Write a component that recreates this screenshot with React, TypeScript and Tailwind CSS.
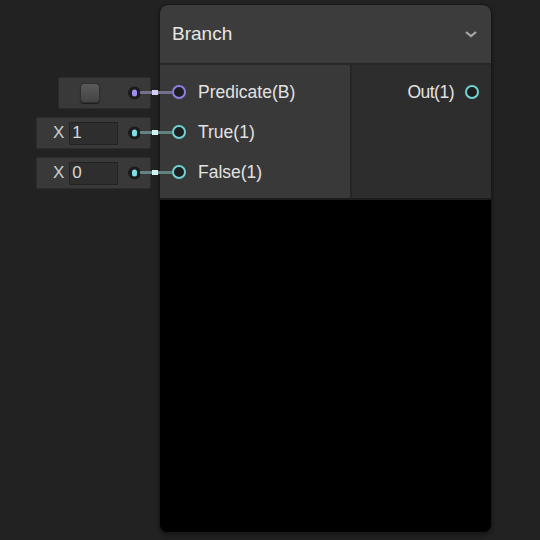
import { ReactNode } from "react";

type PortColor = "purple" | "teal";

const ring: Record<PortColor, string> = {
  purple: "border-[#8f7fe8]",
  teal: "border-[#6fd3d6]",
};

const dot: Record<PortColor, string> = {
  purple: "bg-[#9d8ef0]",
  teal: "bg-[#7ee0e2]",
};

const wire: Record<PortColor, string> = {
  purple: "bg-[#757089]",
  teal: "bg-[#648282]",
};

const knot: Record<PortColor, string> = {
  purple: "bg-[#d6cff6]",
  teal: "bg-[#d0f3f3]",
};

const Port = ({ color }: { color: PortColor }) => (
  <span
    className={`block w-[14px] h-[14px] rounded-full border-2 bg-[#1e1e1e] ${ring[color]}`}
  />
);

const InputField = ({
  children,
  color,
  className,
}: {
  children: ReactNode;
  color: PortColor;
  className: string;
}) => (
  <div
    className={`relative h-[32px] flex items-center bg-[#393939] border border-[#2c2c2c] rounded-[2px] ${className}`}
  >
    {children}
    <span className="absolute right-[9px] top-1/2 -translate-y-1/2 w-[13px] h-[13px] rounded-full bg-[#1b1b1b] flex items-center justify-center">
      <span className={`block w-[5px] h-[7px] rounded-full ${dot[color]}`} />
    </span>
  </div>
);

const Vector1 = ({ value }: { value: string }) => (
  <>
    <span className="ml-[16px] text-[17px] text-[#cfcfcf]">X</span>
    <span className="ml-[5px] w-[49px] h-[23px] bg-[#2e2e2e] border border-[#232323] flex items-center pl-[2px] text-[17px] text-[#d8d8d8]">
      {value}
    </span>
  </>
);

const Wire = ({ color, top }: { color: PortColor; top: string }) => (
  <div className={`absolute z-10 left-[140px] w-[32px] h-[3px] ${top} ${wire[color]}`}>
    <span className={`absolute left-[12px] -top-[1px] w-[6px] h-[5px] ${knot[color]}`} />
  </div>
);

const inputs: { label: string; color: PortColor }[] = [
  { label: "Predicate(B)", color: "purple" },
  { label: "True(1)", color: "teal" },
  { label: "False(1)", color: "teal" },
];

export default function App() {
  return (
    <div className="relative w-[540px] h-[540px] bg-[#222222] overflow-hidden font-['Liberation_Sans',Arial,sans-serif]">
      {/* fields feeding the node */}
      <div className="absolute left-0 top-[77px] w-[151px] flex flex-col items-end gap-[8px]">
        <InputField color="purple" className="w-[93px]">
          <span className="ml-[21px] w-[20px] h-[20px] rounded-[4px] bg-gradient-to-b from-[#5a5a5a] to-[#444444] border border-[#2e2e2e] shadow-[0_1px_1px_rgba(0,0,0,0.5)]" />
        </InputField>
        <InputField color="teal" className="w-[115px]">
          <Vector1 value="1" />
        </InputField>
        <InputField color="teal" className="w-[115px]">
          <Vector1 value="0" />
        </InputField>
      </div>

      {/* node */}
      <div className="absolute left-[159px] top-[4px] w-[333px] h-[529px] rounded-[9px] border border-[#181818] bg-black overflow-hidden flex flex-col shadow-[0_2px_4px_rgba(0,0,0,0.4)]">
        <div className="h-[60px] shrink-0 bg-[#3c3c3c] border-b-2 border-[#272727] flex items-center justify-between pl-[12px] pr-[13px]">
          <span className="text-[19px] text-[#e6e6e6]">Branch</span>
          <svg width="14" height="10" viewBox="0 0 14 10" fill="none">
            <path d="M2 3l5 4 5-4" stroke="#a8a8a8" strokeWidth="2.2" />
          </svg>
        </div>

        <div className="h-[135px] shrink-0 flex border-b-2 border-[#1c1c1c]">
          <div className="w-[192px] bg-[#393939] border-r-2 border-[#262626] pt-[7px]">
            {inputs.map((row) => (
              <div key={row.label} className="h-[40px] flex items-center pl-[12px]">
                <Port color={row.color} />
                <span className="ml-[12px] text-[17.5px] text-[#e2e2e2]">{row.label}</span>
              </div>
            ))}
          </div>
          <div className="flex-1 bg-[#2d2d2d] pt-[7px]">
            <div className="h-[40px] flex items-center justify-end pr-[12px]">
              <span className="text-[17.5px] text-[#e2e2e2] tracking-[-0.5px]">Out(1)</span>
              <span className="ml-[11px]">
                <Port color="teal" />
              </span>
            </div>
          </div>
        </div>

        <div className="flex-1 bg-black" />
      </div>

      <Wire color="purple" top="top-[91px]" />
      <Wire color="teal" top="top-[131px]" />
      <Wire color="teal" top="top-[171px]" />
    </div>
  );
}
